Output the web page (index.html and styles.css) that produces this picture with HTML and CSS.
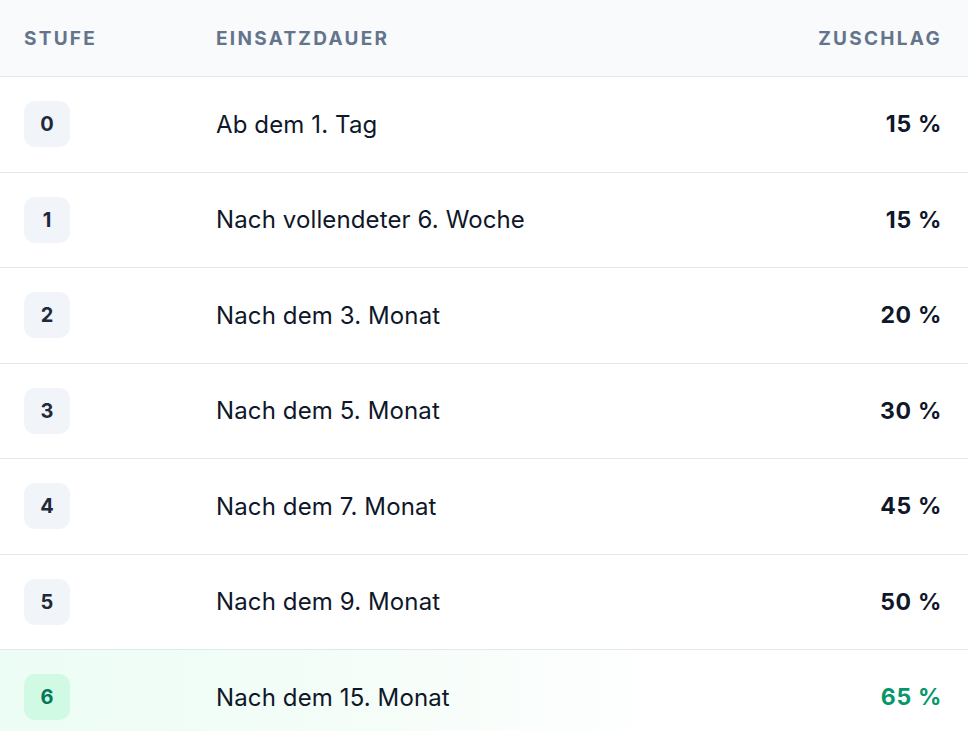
FILE: index.html
```html
<!DOCTYPE html>
<html lang="de">
<head>
    <meta charset="UTF-8">
    <meta name="viewport" content="width=device-width, initial-scale=1.0">
    <title>Zuschläge nach Einsatzdauer</title>
    <link rel="stylesheet" href="styles.css">
</head>
<body>
    <div class="rates">
        <div class="rates-head">
            <span>Stufe</span>
            <span>Einsatzdauer</span>
            <span class="right">Zuschlag</span>
        </div>

        <div class="rate-row">
            <span class="level">0</span>
            <span class="duration">Ab dem 1. Tag</span>
            <span class="pct">15 %</span>
        </div>
        <div class="rate-row">
            <span class="level">1</span>
            <span class="duration">Nach vollendeter 6. Woche</span>
            <span class="pct">15 %</span>
        </div>
        <div class="rate-row">
            <span class="level">2</span>
            <span class="duration">Nach dem 3. Monat</span>
            <span class="pct">20 %</span>
        </div>
        <div class="rate-row">
            <span class="level">3</span>
            <span class="duration">Nach dem 5. Monat</span>
            <span class="pct">30 %</span>
        </div>
        <div class="rate-row">
            <span class="level">4</span>
            <span class="duration">Nach dem 7. Monat</span>
            <span class="pct">45 %</span>
        </div>
        <div class="rate-row">
            <span class="level">5</span>
            <span class="duration">Nach dem 9. Monat</span>
            <span class="pct">50 %</span>
        </div>
        <!-- highest level is highlighted -->
        <div class="rate-row top">
            <span class="level">6</span>
            <span class="duration">Nach dem 15. Monat</span>
            <span class="pct">65 %</span>
        </div>
    </div>
</body>
</html>
```

FILE: styles.css
```css
* {
    margin: 0;
    padding: 0;
    box-sizing: border-box;
}
body {
    background-color: white;
    font-family: 'Inter', 'Noto Sans', sans-serif;
    color: #0f172a;
}
.rates {
    width: 100%;
}
.rates-head,
.rate-row {
    display: grid;
    grid-template-columns: 192px 1fr auto;
    align-items: center;
    padding: 0 26px 0 24px;
    border-bottom: 1px solid #e2e8f0;
}
.rates-head {
    height: 77px;
    background-color: #f8fafc;
    font-size: 19px;
    font-weight: 700;
    letter-spacing: 0.12em;
    text-transform: uppercase;
    color: #64748b;
}
.rates-head .right,
.pct {
    text-align: right;
}
.rate-row {
    height: 95.5px;
}
.level {
    width: 46px;
    height: 46px;
    border-radius: 11px;
    background-color: #f1f5f9;
    color: #1e293b;
    display: flex;
    align-items: center;
    justify-content: center;
    font-size: 20px;
    font-weight: 700;
}
.duration {
    font-size: 24px;
    font-weight: 400;
    letter-spacing: 0.005em;
    color: #0f172a;
}
.pct {
    font-size: 23px;
    font-weight: 700;
    letter-spacing: 0.03em;
    color: #0f172a;
}
.rate-row.top {
    background: linear-gradient(90deg, #ecfdf5 0%, #f4fdf8 35%, #ffffff 70%);
}
.rate-row.top .level {
    background-color: #d1fae5;
    color: #047857;
}
.rate-row.top .pct {
    color: #059669;
}
```
